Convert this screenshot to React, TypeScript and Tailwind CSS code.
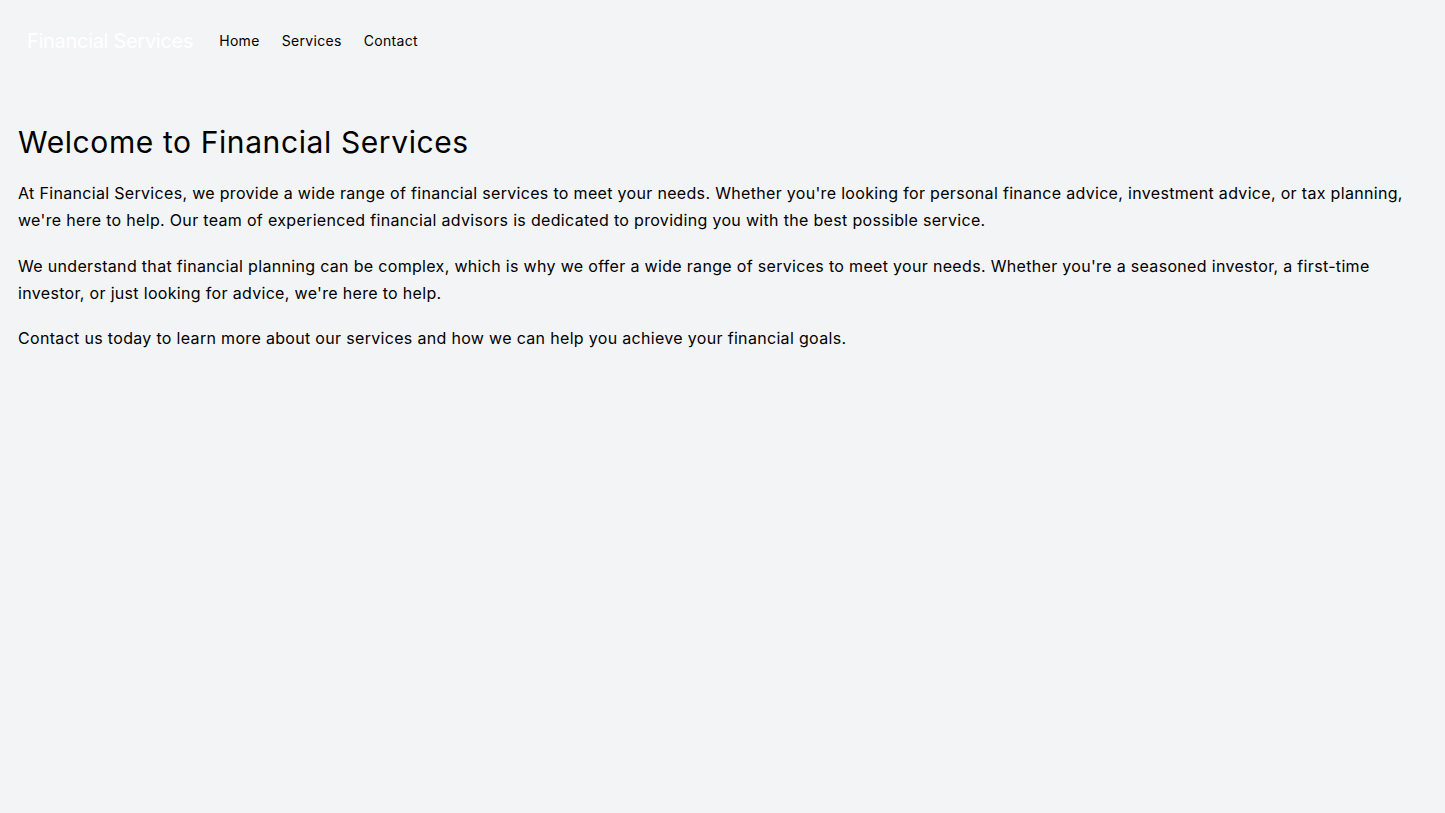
const links = ["Home", "Services", "Contact"];

export default function App() {
    return (
        <div className="min-h-screen bg-gray-100 text-black tracking-[0.02em]" style={{ fontFamily: 'Inter, "Liberation Sans", sans-serif' }}>
            <header className="px-[27px] py-[27px]">
                <nav className="flex items-center">
                    <span className="text-xl text-white mr-[26px] leading-7 tracking-[-0.015em]">Financial Services</span>
                    <ul className="flex items-center gap-[22px] text-sm">
                        {links.map((l) => (
                            <li key={l}>
                                <a href="#" className="text-black">{l}</a>
                            </li>
                        ))}
                    </ul>
                </nav>
            </header>
            <main className="px-[18px] pt-[42px]">
                <h1 className="text-3xl leading-9 mb-[20px] tracking-[0.02em]">Welcome to Financial Services</h1>
                <p className="text-base leading-[27px] mb-[18.5px]">
                    At Financial Services, we provide a wide range of financial services to meet your needs. Whether you're looking for personal finance advice, investment advice, or tax planning, we're here to help. Our team of experienced financial advisors is dedicated to providing you with the best possible service.
                </p>
                <p className="text-base leading-[27px] mb-[18.5px]">
                    We understand that financial planning can be complex, which is why we offer a wide range of services to meet your needs. Whether you're a seasoned investor, a first-time investor, or just looking for advice, we're here to help.
                </p>
                <p className="text-base leading-[27px]">
                    Contact us today to learn more about our services and how we can help you achieve your financial goals.
                </p>
            </main>
        </div>
    );
}
